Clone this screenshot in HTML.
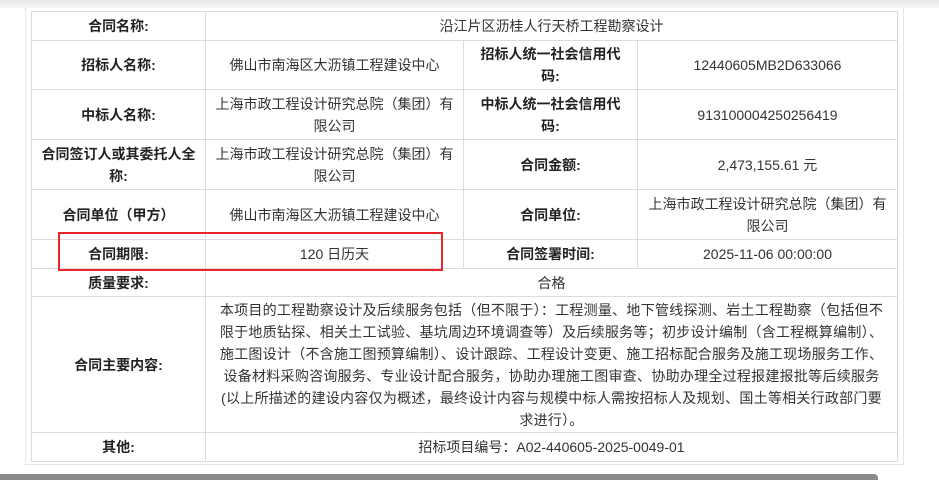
<!DOCTYPE html>
<html><head><meta charset="utf-8"><style>
body{margin:0;width:939px;height:480px;overflow:hidden;background:#fff;position:relative;font-family:"Liberation Sans","Noto Sans CJK SC",sans-serif;color:#333;}
.top{position:absolute;left:0;top:0;width:939px;height:8px;background:linear-gradient(#e6e6e6,#f7f7f7);}
.wrap{position:absolute;left:25px;top:8px;width:877px;height:456px;border:1px solid #e6e6e6;border-top:none;}
table{position:absolute;left:31px;top:11px;border-collapse:collapse;width:866px;table-layout:fixed;font-size:14px;}
td{border:1px solid #dcdcdc;text-align:center;vertical-align:middle;line-height:22px;padding:0 6px;}
td.l{font-weight:bold;color:#222;}
td.n{padding:0 14px;}
td.c{white-space:nowrap;padding:0;letter-spacing:0.26px;}
.red{position:absolute;left:58px;top:232px;width:381px;height:35px;border:2px solid #e8262a;}
.bar{position:absolute;left:0;top:474px;width:878px;height:6px;background:#8a8a8a;border-radius:0 4px 0 0;}
</style></head><body>
<div class="top"></div>
<div class="wrap"></div>
<table>
<colgroup><col style="width:174px"><col style="width:258px"><col style="width:174px"><col style="width:260px"></colgroup>
<tr style="height:29px"><td class="l">合同名称:</td><td colspan="3">沿江片区沥桂人行天桥工程勘察设计</td></tr>
<tr style="height:49px"><td class="l">招标人名称:</td><td>佛山市南海区大沥镇工程建设中心</td><td class="l n">招标人统一社会信用代码:</td><td>12440605MB2D633066</td></tr>
<tr style="height:50px"><td class="l">中标人名称:</td><td>上海市政工程设计研究总院（集团）有限公司</td><td class="l n">中标人统一社会信用代码:</td><td>913100004250256419</td></tr>
<tr style="height:50px"><td class="l">合同签订人或其委托人全称:</td><td>上海市政工程设计研究总院（集团）有限公司</td><td class="l">合同金额:</td><td>2,473,155.61 元</td></tr>
<tr style="height:50px"><td class="l">合同单位（甲方）</td><td>佛山市南海区大沥镇工程建设中心</td><td class="l">合同单位:</td><td>上海市政工程设计研究总院（集团）有限公司</td></tr>
<tr style="height:29px"><td class="l">合同期限:</td><td>120 日历天</td><td class="l">合同签署时间:</td><td>2025-11-06 00:00:00</td></tr>
<tr style="height:28px"><td class="l">质量要求:</td><td colspan="3">合格</td></tr>
<tr style="height:136px"><td class="l">合同主要内容:</td><td colspan="3" class="c">本项目的工程勘察设计及后续服务包括（但不限于）：工程测量、地下管线探测、岩土工程勘察（包括但不<br>限于地质钻探、相关土工试验、基坑周边环境调查等）及后续服务等；初步设计编制（含工程概算编制）、<br>施工图设计（不含施工图预算编制）、设计跟踪、工程设计变更、施工招标配合服务及施工现场服务工作、<br>设备材料采购咨询服务、专业设计配合服务，协助办理施工图审查、协助办理全过程报建报批等后续服务<br>(以上所描述的建设内容仅为概述，最终设计内容与规模中标人需按招标人及规划、国土等相关行政部门要<br>求进行）。</td></tr>
<tr style="height:29px"><td class="l">其他:</td><td colspan="3">招标项目编号：A02-440605-2025-0049-01</td></tr>
</table>
<div class="red"></div>
<div class="bar"></div>
</body></html>
